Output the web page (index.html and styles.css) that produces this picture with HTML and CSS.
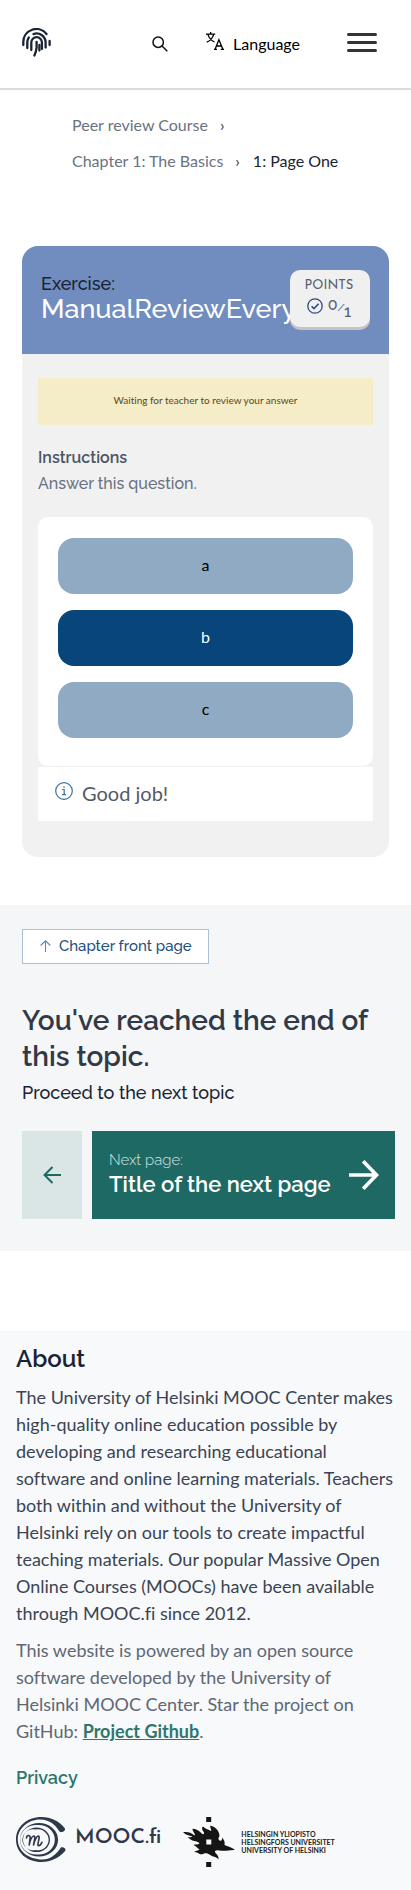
FILE: index.html
```html
<!DOCTYPE html>
<html lang="en">
<head>
<meta charset="utf-8">
<meta name="viewport" content="width=device-width, initial-scale=1">
<title>1: Page One</title>
<link rel="stylesheet" href="styles.css">
</head>
<body>
<header class="topbar">
  <a class="home" href="#" aria-label="Home">
    <svg width="29" height="29" viewBox="0 0 29 29" fill="none" stroke="#1a2333" stroke-width="2.3" stroke-linecap="round">
      <path d="M1.300 17V14A13 13 0 0 1 24.500 6"/>
      <path d="M27.600 13v4"/>
      <path d="M5.300 20v-6a9 9 0 0 1 1.500-4.500M11.500 6A9 9 0 0 1 23.600 14v5.500"/>
      <path d="M9.300 22v-7.500a5.300 5.300 0 0 1 10.600 0V21"/>
      <path d="M14.600 14v5.500a23 23 0 0 1-2.200 8"/>
      <path d="M17.400 17v5.500"/>
    </svg>
  </a>
  <button class="plain search" aria-label="Search">
    <svg width="16" height="16" viewBox="0 0 16 16" fill="none" stroke="#111" stroke-width="1.500"><circle cx="6.200" cy="6.200" r="5.200"/><path d="M10 10l5.300 5.300"/></svg>
  </button>
  <button class="plain language">
    <svg width="18" height="18" viewBox="0 0 18 18" fill="none" stroke="#000" stroke-width="1.300"><path d="M0 2.200h9.200M4.600 0v2.200M2 2.600C3 6 5.500 8.500 8.500 10M7.600 2.600C6.600 6.200 4 8.800.8 10.200"/><path d="M9.200 17l3.700-9.200L16.800 17M10.500 14h5M8 17.300h3M14.700 17.300h3.300"/></svg>
    Language
  </button>
  <button class="plain menu" aria-label="Open menu"><span></span><span></span><span></span></button>
</header>

<main>
  <nav class="crumbs" aria-label="Breadcrumb">
    <ol>
      <li><a href="#">Peer review Course</a><span class="sep">›</span></li>
      <li><a href="#">Chapter 1: The Basics</a><span class="sep">›</span></li>
      <li class="current">1: Page One</li>
    </ol>
  </nav>

  <section class="exercise">
    <header class="exercise-head">
      <h2><span class="kind">Exercise:</span><span class="name">ManualReviewEvery</span></h2>
      <div class="points">
        <div class="points-label">POINTS</div>
        <div class="points-value">
          <svg width="16" height="16" viewBox="0 0 16 16" fill="none" stroke="#2f4a80" stroke-width="1.300"><circle cx="8" cy="8" r="7.200"/><path d="M4.600 8.200l2.400 2.400 4.600-4.800" stroke-width="1.600"/></svg>
          <span class="score"><sup>0</sup><i>/</i><sub>1</sub></span>
        </div>
      </div>
    </header>
    <div class="exercise-body">
      <p class="notice">Waiting for teacher to review your answer</p>
      <h3>Instructions</h3>
      <p class="task">Answer this question.</p>
      <div class="options">
        <button class="option">a</button>
        <button class="option selected">b</button>
        <button class="option">c</button>
      </div>
      <div class="feedback">
        <svg width="18" height="18" viewBox="0 0 18 18" fill="none" stroke="#3a6f9f" stroke-width="1.200"><circle cx="9" cy="9" r="8.300"/><path d="M7.200 7.500h2v5M7 12.600h4"/><path d="M9 4.500v1.300" stroke-width="1.500"/></svg>
        <p>Good job!</p>
      </div>
    </div>
  </section>

  <section class="ending">
    <a class="front" href="#">
      <svg width="11" height="12" viewBox="0 0 11 12" fill="none" stroke="#5f88ae" stroke-width="1.100"><path d="M5.500 12V.8M.6 5.500L5.500.8l4.900 4.700"/></svg>
      Chapter front page
    </a>
    <h2>You've reached the end of this topic.</h2>
    <p>Proceed to the next topic</p>
    <div class="pager">
      <a class="prev" href="#" aria-label="Previous page">
        <svg width="18" height="18" viewBox="0 0 18 18" fill="none" stroke="#1f6964" stroke-width="2"><path d="M18 9H1.500M9.500 1L1.500 9l8 8"/></svg>
      </a>
      <a class="next" href="#">
        <span><small>Next page:</small><strong>Title of the next page</strong></span>
        <svg width="30" height="30" viewBox="0 0 30 30" fill="none" stroke="#fff" stroke-width="3.700"><path d="M0 15h27M14.200 1.300L27.500 15 14.200 28.700"/></svg>
      </a>
    </div>
  </section>
</main>

<footer class="footer">
  <h2>About</h2>
  <p>The University of Helsinki MOOC Center makes high-quality online education possible by developing and researching educational software and online learning materials. Teachers both within and without the University of Helsinki rely on our tools to create impactful teaching materials. Our popular Massive Open Online Courses (MOOCs) have been available through MOOC.fi since 2012.</p>
  <p class="soft">This website is powered by an open source software developed by the University of Helsinki MOOC Center. Star the project on GitHub: <a href="#">Project Github</a>.</p>
  <a class="privacy" href="#">Privacy</a>
  <div class="logos">
    <a class="mooc" href="#">
      <svg width="50" height="45" viewBox="0 0 50 45" fill="none" stroke="#2e3849">
        <path fill="#2e3849" stroke="none" d="M49 11.500C43 4 35 0 25.500 0 11 0 0 9.500 0 22.500S11 45 25.500 45C35 45 43 41 49.500 33.500 50 31 47 29.500 44.800 30.500 40 38 34 42.500 26.500 42.500 12 42.500 1.800 33.500 1.800 22.500S12 2.200 24.500 2.400C33 2.500 39 7 43.500 14.500 46 16 49.500 14.500 49 11.500z"/>
        <path fill="#2e3849" stroke="none" fill-rule="evenodd" d="M23 6a19 16.700 0 1 0 0 33.500A19 16.700 0 1 0 23 6zM21.500 8a16 14.800 0 1 1 0 29.500A16 14.800 0 1 1 21.500 8z"/>
        <path fill="#2e3849" stroke="none" fill-rule="evenodd" d="M20.500 10.500a13.500 12.300 0 1 0 0 24.600A13.500 12.300 0 1 0 20.500 10.500zM19.500 12.500a11 10.500 0 1 1 0 20.600A11 10.500 0 1 1 19.500 12.500z"/>
        <path stroke-width="1.600" stroke-linecap="round" d="M10.500 21c0-3 4-3.500 3.600 0l-1 7.500c1-5 3-9.500 4.800-9.500 2 0 0 6-.5 9.500 1-5 3.300-9.500 5-9.500 2.500 0-2 9.500 0 9.800 1.500 0 3-1.800 3.500-3.500"/>
      </svg>
      <span>MOOC.fi</span>
    </a>
    <a class="uni" href="#">
      <svg width="52" height="50" viewBox="0 0 52 50" fill="#151515">
        <path d="M23.200 0h5v5h-5zM23.200 45h5v5h-5z"/>
        <path fill-rule="evenodd" d="M0 15.200c4-.7 8 0 11.500 3.300C13 17 9.500 15 9.500 11.800c4-.3 6.500 2 9.500 5C21 18 22 16 20 14c-1.500-2-1-3.500 0-4.500 3 3 5.500 3 8 4.500 1-2-1.500-3-.5-5.500 5 1.500 8.500 5 9 10-.3 2-2 3 0 5 2 1 3-1 2.500-3 2.500 2.500 3 5 2.500 7.500 3 1.500 7.500 2 10.500 5-4-.5-8 1-12.500.7-3 .3-5.500-1.200-7.500.3-.5 3 4 3 3.500 8.500-2-3-6-2.500-9-5-2.500-1.500-4-1.500-6-.8-1.500 1-4 .8-5.500-.7-1.500-1-3-1-4-1 1.500-1.500 4-1 5.500-2.500-2.500-1.500-3.500-3.500-6-4.500 1.500-1 4 0 6-1.500-2-3-6-2-8-3.500-2-1-2.500-2-4-2.500 1.800-.5 3.500 0 5-1C6 18.500 3 18 0 15.200zM23.300 22.500v5h5v-5z"/>
      </svg>
      <span>HELSINGIN YLIOPISTO<br>HELSINGFORS UNIVERSITET<br>UNIVERSITY OF HELSINKI</span>
    </a>
  </div>
</footer>
</body>
</html>
```
FILE: styles.css
```css
* { box-sizing: border-box; }
body { margin: 0; background: #fff; color: #1a2333; font-family: Lato, sans-serif; font-size: 16px; font-variant-ligatures: none; }
h2, h3, p, ol { margin: 0; padding: 0; }
a { color: inherit; text-decoration: none; }
svg { display: block; flex: none; }
button { font: inherit; cursor: pointer; }

.topbar { display: flex; align-items: center; height: 90px; padding: 0 34px 0 22px; border-bottom: 2px solid #dcdcdc; }
.plain { display: flex; align-items: center; border: 0; padding: 0; background: none; color: #000; }
.home { margin-right: auto; padding-bottom: 4px; }
.search { margin-right: 38px; }
.language { gap: 9px; margin-right: 47px; line-height: 24px; }
.language svg { margin-bottom: 6px; }
.menu { flex-direction: column; gap: 5px; padding-bottom: 4px; }
.menu span { width: 30px; height: 3px; border-radius: 2px; background: #333; }

.crumbs { padding: 17px 24px 67px 72px; }
.crumbs ol { display: flex; flex-wrap: wrap; list-style: none; line-height: 36px; color: #6b7280; }
.crumbs li:first-child { flex-basis: 100%; }
.crumbs .sep { margin: 0 13px 0 12px; color: #333; }
.crumbs .current { color: #1a2333; }

.exercise { margin: 0 22px 48px; border-radius: 16px; overflow: hidden; background: #f1f1f1; }
.exercise-head { display: flex; align-items: flex-start; min-height: 108px; padding: 24px 19px; background: #718dbf; }
.exercise-head h2 { flex: 1; min-width: 0; padding-top: 4px; font-weight: 500; }
.kind, .name { display: block; white-space: nowrap; font-family: Raleway, Lato, sans-serif; }
.kind { font-size: 18px; line-height: 20px; }
.name { font-size: 27px; line-height: 30px; color: #fff; }
.points { position: relative; flex: none; width: 80px; height: 57px; padding: 8px 2px 0 0; border-radius: 10px; background: #f0f0f0; box-shadow: 0 3px 0 #c4c4c4; text-align: center; color: #57606f; }
.points-label { font: 13px/16px "Josefin Sans", Lato, sans-serif; }
.points-value { display: flex; justify-content: center; gap: 5px; padding-top: 4px; }
.score { font: 500 16px/16px Raleway, Lato, sans-serif; }
.score i { font-size: 10px; }
.score sup, .score sub { font-size: 16px; line-height: 0; }
.score sup { vertical-align: 1px; }
.score sub { vertical-align: -6px; }

.exercise-body { padding: 24px 16px 36px; }
.notice { padding: 14px 8px 17px; background: #f5ecc8; color: #57491b; font-size: 10px; line-height: 16px; text-align: center; }
.exercise-body h3 { margin-top: 20px; font: 600 16px/26px Raleway, Lato, sans-serif; color: #4b5565; }
.task { margin-bottom: 20px; font-family: Raleway, Lato, sans-serif; font-size: 16px; line-height: 26px; font-weight: 500; color: #687282; }
.options { display: grid; gap: 16px; padding: 21px 20px 28px; border-radius: 10px; background: #fff; }
.option { height: 56px; padding: 0 0 3px; border: 0; border-radius: 16px; background: #91aac4; color: #000; }
.option.selected { background: #07457a; color: #fff; }
.feedback { display: flex; gap: 9px; margin-top: 1px; padding: 15px 17px 16px; background: #fff; }
.feedback p { font-size: 20px; line-height: 23px; color: #535a68; }

.ending { padding: 24px 16px 32px 22px; background: #f4f6f8; font-family: Raleway, Lato, sans-serif; }
.front { display: inline-flex; gap: 8px; align-items: center; height: 35px; padding: 0 16px 2px 17px; border: 1px solid #a9c1d6; background: #fff; color: #1c4f83; font-size: 15px; font-weight: 500; }
.ending h2 { margin-top: 39px; font-size: 28px; line-height: 36px; font-weight: 600; color: #313947; }
.ending p { margin: 4px 0 25px; font-size: 18px; line-height: 27px; font-weight: 500; }
.pager { display: flex; gap: 10px; height: 88px; }
.prev { display: grid; place-items: center; flex: none; width: 60px; background: #dae6e5; }
.next { flex: 1; display: flex; align-items: center; justify-content: space-between; padding: 0 16px 0 17px; background: #1f6964; color: #fff; }
.next span { padding-bottom: 6px; }
.next small, .next strong { display: block; line-height: 24px; white-space: nowrap; }
.next small { font-size: 15px; font-weight: 300; color: #d4e3e1; }
.next strong { font-size: 22px; font-weight: 600; }

.footer { margin-top: 80px; padding: 16px 16px 23px; background: #f7f9fa; }
.footer h2 { margin-bottom: 13px; font: 600 24px/24px Raleway, Lato, sans-serif; }
.footer p { font-size: 18px; line-height: 27px; color: #3b4454; }
.footer .soft { margin-top: 10px; color: #606774; }
.soft a { color: #2f766d; font-weight: 700; text-decoration: underline; }
.privacy { display: block; margin: 19px 0 26px; font: 600 18px/27px Raleway, Lato, sans-serif; color: #2f766d; }
.logos { display: flex; gap: 22px; align-items: flex-start; }
.mooc, .uni { display: flex; align-items: center; }
.mooc { gap: 9px; color: #2e3849; font: 600 21px/26px "Josefin Sans", Lato, sans-serif; }
.mooc span { padding-bottom: 3px; }
.uni { gap: 6px; color: #222; font-size: 7px; line-height: 8px; font-weight: 700; }
```
